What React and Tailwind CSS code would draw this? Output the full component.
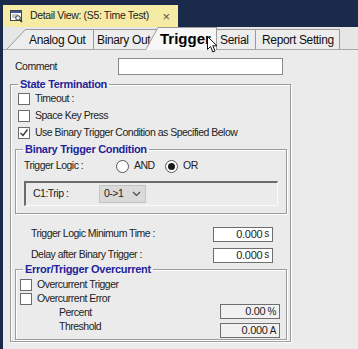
import React from "react";

const font = "font-['Liberation_Sans','DejaVu_Sans',sans-serif]";

function Check({ checked }) {
  return (
    <span className="w-[12px] h-[12px] border border-[#6b6b6b] bg-white flex items-center justify-center shrink-0">
      {checked && (
        <svg width="10" height="10" viewBox="0 0 10 10">
          <path d="M1.5 5 L4 7.5 L8.5 1.5" fill="none" stroke="#333" strokeWidth="1.3" />
        </svg>
      )}
    </span>
  );
}

function Radio({ checked }) {
  return (
    <span className="w-[13px] h-[13px] rounded-full border border-[#555] bg-white flex items-center justify-center shrink-0">
      {checked && <span className="w-[7px] h-[7px] rounded-full bg-[#1a1a1a]" />}
    </span>
  );
}

function Group({ title, className, children }) {
  return (
    <fieldset className={`border border-[#9c9c9c] shadow-[inset_1px_1px_0_#fff,1px_1px_0_#fff] ${className}`}>
      <legend className="ml-[7px] px-[2px] text-[11px] tracking-[-0.3px] font-bold text-[#23239a] leading-[13px]">
        {title}
      </legend>
      {children}
    </fieldset>
  );
}

function Field({ value, unit, white = true }) {
  return (
    <div
      className={`w-[60px] h-[15px] border border-[#6e6e6e] ${white ? "bg-white" : "bg-[#f1f1f1]"} flex items-center justify-end pr-[3px] text-[11px] tracking-[-0.3px] leading-none text-[#222]`}
    >
      {value}
      <span className="ml-[2px] text-[10px]">{unit}</span>
    </div>
  );
}

export default function App() {
  return (
    <div className={`relative w-[358px] h-[349px] bg-[#1b2a4a] flex flex-col overflow-hidden ${font}`}>
      {/* document tab */}
      <div className="h-[27px] flex items-end pl-[3px]">
        <div className="w-[175px] h-[22px] bg-[#f6eba4] flex items-center pl-[7px] pr-[8px] whitespace-nowrap">
          <svg width="13" height="13" viewBox="0 0 13 13" className="shrink-0">
            <rect x="0.5" y="0.5" width="11" height="10" fill="#fff" stroke="#444" />
            <rect x="1" y="1" width="10" height="2" fill="#3a5a9a" />
            <path d="M2 5h6M2 7h4" stroke="#888" />
            <circle cx="8" cy="8" r="2.3" fill="#e8f0ff" stroke="#333" />
            <path d="M9.7 9.7 L12 12" stroke="#333" strokeWidth="1.5" />
          </svg>
          <span className="ml-[7px] text-[10.5px] tracking-[-0.35px] text-[#222]">Detail View: (S5: Time Test)</span>
          <span className="ml-auto text-[13px] text-[#555] leading-none">×</span>
        </div>
      </div>

      <div className="flex-1 ml-[3px] bg-[#ebebeb] flex flex-col">
        {/* tab strip */}
        <div className="h-[23px] flex items-end border-b border-[#a8a8a8] bg-[#e6e6e6] pl-[4px] text-[12px] tracking-[-0.35px] text-[#111] whitespace-nowrap">
          <svg width="19" height="20" viewBox="0 0 19 20" className="shrink-0 -mr-px">
            <path d="M0 20 L18 1 L19 1 L19 20 Z" fill="#ededed" />
            <path d="M0 20 L18 1 L19 1" fill="none" stroke="#9a9a9a" />
          </svg>
          <div className="h-[20px] w-[69px] border-t border-r border-[#9a9a9a] bg-[#ededed] flex items-center pl-[4px]">
            Analog Out
          </div>
          <div className="h-[20px] w-[65px] border-t border-[#9a9a9a] bg-[#ededed] flex items-center pl-[3px] overflow-hidden">
            Binary Out
          </div>
          <div className="relative z-10 -ml-[13px] h-[23px] flex items-end -mb-px">
            <svg width="13" height="23" viewBox="0 0 13 23" className="shrink-0 -mr-px">
              <path d="M0 23 L12 1 L13 1 L13 23 Z" fill="#f7f7f7" />
              <path d="M0 22 L12 0.5 L13 0.5" fill="none" stroke="#9a9a9a" />
            </svg>
            <div className="h-[23px] w-[59px] border-t border-r border-[#9a9a9a] bg-[#f7f7f7] flex items-center text-[15px] tracking-[0px] font-bold text-black pl-[2px]">
              Trigger
            </div>
          </div>
          <div className="h-[20px] w-[39px] border-t border-r border-[#9a9a9a] bg-[#ededed] flex items-center pl-[3px]">
            Serial
          </div>
          <div className="h-[20px] w-[84px] border-t border-r border-[#9a9a9a] bg-[#ededed] flex items-center pl-[6px]">
            Report Setting
          </div>
        </div>

        {/* body */}
        <div className="flex flex-col text-[10.5px] tracking-[-0.5px] text-[#222] whitespace-nowrap">
          <div className="mt-[8px] h-[17px] flex items-center">
            <span className="ml-[12px] w-[103px]">Comment</span>
            <div className="w-[165px] h-[17px] bg-white border border-[#8a8a8a]" />
          </div>

          <Group title="State Termination" className="mt-[3px] ml-[7px] w-[281px] h-[264px]">
            <div className="flex flex-col pl-[7px]">
              <div className="h-[16px] flex items-center gap-[5px]">
                <Check />
                <span>Timeout :</span>
              </div>
              <div className="h-[17px] flex items-center gap-[5px]">
                <Check />
                <span>Space Key Press</span>
              </div>
              <div className="h-[18px] flex items-center gap-[5px]">
                <Check checked />
                <span>Use Binary Trigger Condition as Specified Below</span>
              </div>
            </div>

            <Group title="Binary Trigger Condition" className="ml-[4px] mt-[1px] w-[272px] h-[71px]">
              <div className="mt-[1px] h-[18px] flex items-center pl-[8px]">
                <span className="w-[92px]">Trigger Logic :</span>
                <Radio />
                <span className="ml-[5px] w-[31px]">AND</span>
                <Radio checked />
                <span className="ml-[5px]">OR</span>
              </div>
              <div className="ml-[8px] mt-[6px] w-[254px] h-[25px] border-t-2 border-l-2 border-[#6c6c6c] border-r border-b border-r-[#fafafa] border-b-[#fafafa] flex items-center">
                <span className="ml-[7px] w-[66px]">C1:Trip :</span>
                <div className="w-[47px] h-[18px] bg-[#dadada] border border-[#c4c4c4] flex items-center justify-between px-[4px]">
                  <span>0-&gt;1</span>
                  <svg width="9" height="6" viewBox="0 0 9 6">
                    <path d="M1 1 L4.5 4.5 L8 1" fill="none" stroke="#444" strokeWidth="1.1" />
                  </svg>
                </div>
              </div>
            </Group>

            <div className="mt-[12px] h-[16px] flex items-center pl-[20px]">
              <span className="w-[182px]">Trigger Logic Minimum Time :</span>
              <Field value="0.000" unit="s" />
            </div>
            <div className="mt-[5px] h-[16px] flex items-center pl-[20px]">
              <span className="w-[182px]">Delay after Binary Trigger :</span>
              <Field value="0.000" unit="s" />
            </div>

            <Group title="Error/Trigger Overcurrent" className="ml-[4px] w-[272px] h-[77px]">
              <div className="flex flex-col pl-[4px] mt-[2px]">
                <div className="h-[14px] flex items-center gap-[5px]">
                  <Check />
                  <span>Overcurrent Trigger</span>
                </div>
                <div className="h-[14px] flex items-center gap-[5px]">
                  <Check />
                  <span>Overcurrent Error</span>
                </div>
                <div className="flex items-start">
                  <div className="ml-[39px] w-[161px] flex flex-col">
                    <span className="h-[14px] flex items-center">Percent</span>
                    <span className="h-[14px] flex items-center">Threshold</span>
                  </div>
                  <div className="-mt-[2px] flex flex-col gap-[4px]">
                    <Field value="0.00" unit="%" white={false} />
                    <Field value="0.000" unit="A" white={false} />
                  </div>
                </div>
              </div>
            </Group>
          </Group>
        </div>
      </div>

      {/* mouse pointer */}
      <svg width="12" height="18" viewBox="0 0 12 18" className="absolute left-[207px] top-[36px] z-20">
        <path d="M0.5 0.5 L0.5 13.5 L3.5 10.5 L5.8 16 L8 15 L5.8 9.8 L10 9.8 Z" fill="#fff" stroke="#111" strokeWidth="1" strokeLinejoin="round" />
      </svg>
    </div>
  );
}
